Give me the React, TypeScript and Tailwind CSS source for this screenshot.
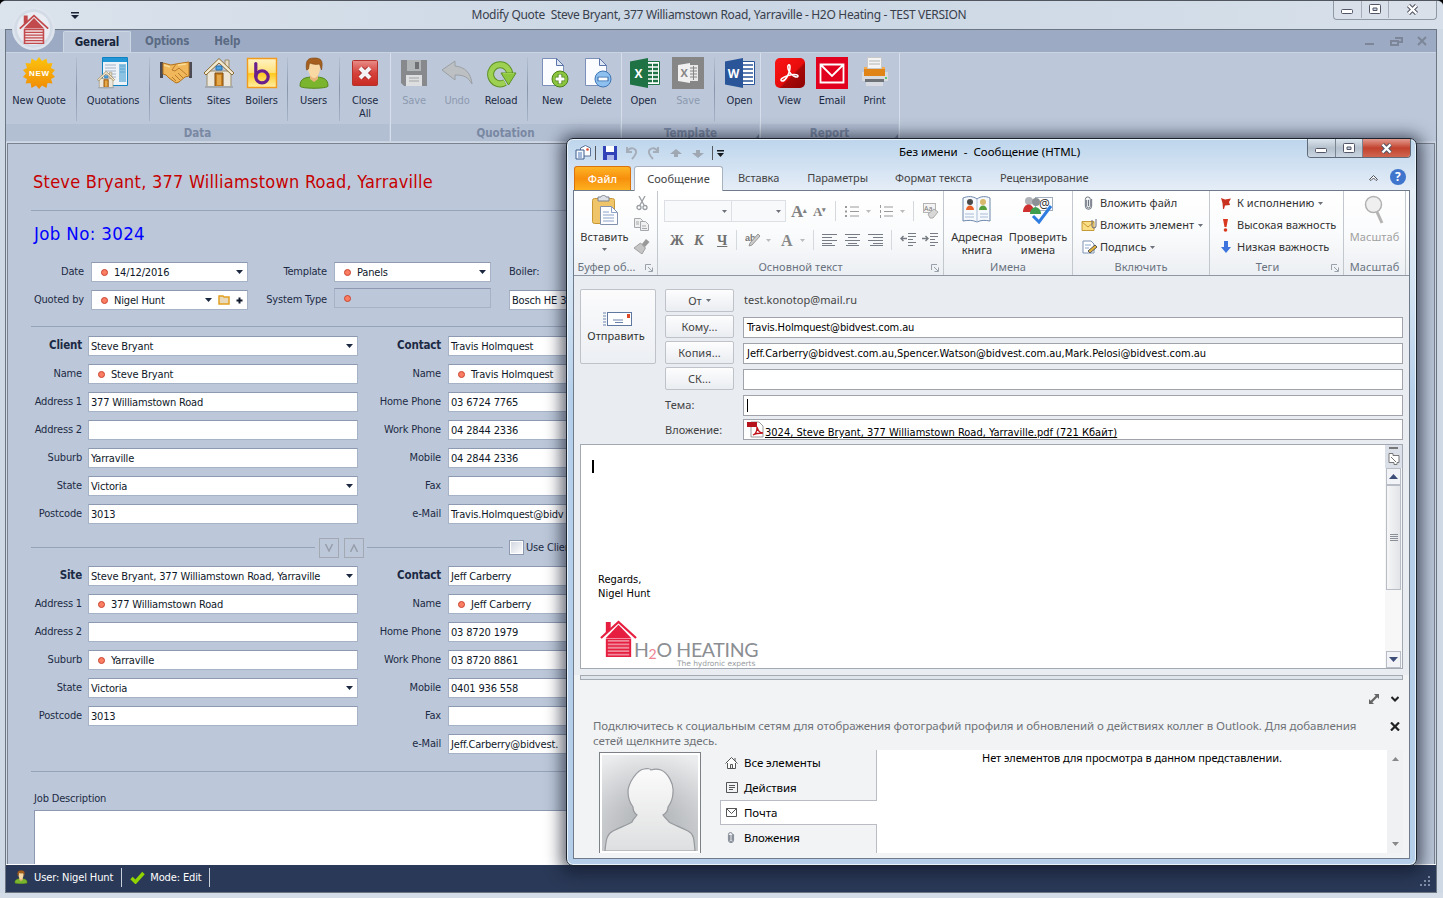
import React from "react";

type Kids = { children?: React.ReactNode };

const Caret = ({ c = "text-[#1b2840]" }: { c?: string }) => (
  <svg className={`${c} shrink-0`} width="7" height="4" viewBox="0 0 7 4"><path d="M0 0h7L3.500 4z" fill="currentColor" /></svg>
);

const Dot = () => <span className="mr-[6px] ml-[7px] size-[7px] shrink-0 rounded-full border border-[#c9432f] bg-[#fb7d62]" />;

const House = ({ w, c, l }: { w: number; c: string; l: string }) => (
  <svg width={w} height={w} viewBox="0 0 38 38" className="shrink-0">
    <path d="M6 2h5v8l-5 5z" fill={c} />
    <path d="M19 5l13 13.500H6z" fill={c} />
    <path d="M1 18.500L19 2l18 16.500" fill="none" stroke={c} strokeWidth="2.200" />
    <path d="M6 19h26v19H6z" fill={c} />
    <path d="M8 21.500h22M8 25h22M8 28.500h22M8 32h22M8 35.500h22" stroke={l} strokeWidth="1.900" />
  </svg>
);

/* ------------------------------ ribbon icons ------------------------------ */
const S = ({ children }: Kids) => <svg width="32" height="32" viewBox="0 0 32 32">{children}</svg>;

const NewBadge = () => (
  <S>
    <defs><linearGradient id="nb" x1="0" y1="0" x2="0" y2="1"><stop offset="0" stopColor="#fdc40e" /><stop offset="1" stopColor="#f08b04" /></linearGradient></defs>
    <path d="M16 0l3 4 4.500-2.500 1 5 5-.5-1.500 5L32 13l-3 3.500L32 20l-4 2 1.500 4.500-5-.5-1 5-4.500-2.500L16 32l-3-3.500L8.500 31l-1-5-5 .5L4 22l-4-2 3-3.500L0 13l4-2-1.500-5 5 .5 1-5L13 4z" fill="url(#nb)" />
    <text x="16" y="19" textAnchor="middle" fontSize="8" fontWeight="700" fill="#fff" fontFamily="Liberation Sans" textLength="20">NEW</text>
  </S>
);
const SmallHouse = () => (
  <g>
    <path d="M4 14h24v16H4z" fill="#ece7d8" stroke="#9b8c6c" />
    <path d="M22 3h4v8h-4z" fill="#e6dcc4" stroke="#9b8c6c" />
    <path d="M1 16L16 1.500 31 16l-2 2L16 6 3 18z" fill="#f3ead2" stroke="#8a6a34" />
    <path d="M12 16h8v14h-8z" fill="#c77f1d" stroke="#7f4a10" />
    <path d="M14 18h4v10h-4z" fill="#e5a94c" />
    <path d="M13 9h6v4h-6z" fill="#4aa3e0" stroke="#2a6fae" />
    <path d="M2 30h28" stroke="#a3a9b1" strokeWidth="2" />
  </g>
);
const Quotes = () => (
  <S>
    <path d="M5.500 .5h25v28h-25z" fill="#eef3f8" stroke="#0f82c2" />
    <path d="M6 1h24v4H6z" fill="#2396d6" />
    <path d="M8 8h11M8 11h11M8 14h11M8 17h11M8 20h11" stroke="#a3b4c6" strokeWidth="1.200" />
    <path d="M22 7h7v18h-7z" fill="#8cc3e3" />
    <path d="M23 9h5M23 12h5M23 15h5" stroke="#5aa5d2" />
    <g transform="translate(0 13.500) scale(.57)"><SmallHouse /></g>
  </S>
);
const Hands = () => (
  <S>
    <path d="M0 5h3v16H0zM29 5h3v16h-3z" fill="#4c4a52" />
    <path d="M3 6l8 2 5-1 6-1 7-1v14l-4 1-6 5-3 1-7-5-3-3-3-1z" fill="#f0b85a" stroke="#b4721c" />
    <path d="M16 7l-4 6 3 1 4-3 8 7M12 20l4 4M15 18l5 5M18 16l5 5" fill="none" stroke="#b97a2c" />
    <path d="M4 8l6 2M18 8l8-1" stroke="#fbdc96" strokeWidth="1.500" />
  </S>
);
const Sites = () => <S><SmallHouse /></S>;
const Boilers = () => (
  <S>
    <defs><linearGradient id="bo" x1="0" y1="0" x2="0" y2="1"><stop offset="0" stopColor="#fff3c4" /><stop offset=".48" stopColor="#ffe27a" /><stop offset=".52" stopColor="#ffc91f" /><stop offset="1" stopColor="#fff0a8" /></linearGradient></defs>
    <path d="M1.500 1.500h29v29h-29z" fill="url(#bo)" stroke="#f29a1c" strokeWidth="1.400" />
    <path d="M9.800 6.500v13" stroke="#6a1f8c" strokeWidth="3.200" strokeLinecap="round" />
    <ellipse cx="16" cy="19.800" rx="6.200" ry="6" fill="none" stroke="#6a1f8c" strokeWidth="3.200" />
  </S>
);
const Person = () => (
  <g>
    <path d="M2 29c0-8 6-9 14-9s14 1 14 9c0 3-28 3-28 0z" fill="#7bb52d" stroke="#55871b" />
    <path d="M12 17h8v5l-4 3-4-3z" fill="#e9b57c" />
    <path d="M16 3c6 0 6 5 6 8 0 5-3 10-6 10s-6-5-6-10c0-3 0-8 6-8z" fill="#f8d9a4" />
    <path d="M8.500 13C7.500 4 9 1 16 1s9.500 2 7.500 12l-2-6c-4 1-7 0-10-1l-1 6z" fill="#a5601f" stroke="#7d4413" strokeWidth=".6" />
  </g>
);
const Users = () => <S><Person /></S>;
const CloseAll = () => (
  <S>
    <defs><linearGradient id="ca" x1="0" y1="0" x2="0" y2="1"><stop offset="0" stopColor="#e98d88" /><stop offset=".5" stopColor="#d5423b" /><stop offset="1" stopColor="#c92a22" /></linearGradient></defs>
    <rect x="3.500" y="3.500" width="25" height="25" rx="1" fill="url(#ca)" stroke="#b3322c" />
    <path d="M11.500 11.500l9 9M20.500 11.500l-9 9" stroke="#a12a2a" strokeWidth="6" />
    <path d="M11 11l10 10M21 11L11 21" stroke="#f4f4f6" strokeWidth="4" />
  </S>
);
const Save = () => (
  <S>
    <path d="M3 3h26v26H6l-3-3z" fill="#87898c" />
    <path d="M9 3h14v11H9z" fill="#b2b5b8" /><path d="M17 5h4v7h-4z" fill="#6f7174" />
    <path d="M8 18h16v11H8z" fill="#dcdedf" /><path d="M11 21h10M11 24h10" stroke="#a0a2a5" />
  </S>
);
const Undo = () => <S><path d="M1 13L14 4v5c10 1 16 7 17 18-4-7-8-9-17-9v5z" fill="#bcc0c3" stroke="#9ba0a5" /></S>;
const Reload = () => (
  <S>
    <path d="M24.500 19a9.500 9.500 0 1 0-4.500 6.500" fill="none" stroke="#5d9127" strokeWidth="7" />
    <path d="M24.500 19a9.500 9.500 0 1 0-4.500 6.500" fill="none" stroke="#9ed052" strokeWidth="5" />
    <path d="M16 16h15l-7.500 12z" fill="#8dc63f" stroke="#5d9127" />
    <path d="M18 16.500h11" stroke="#9ed052" />
  </S>
);
const Page = () => (
  <g>
    <path d="M5.500 1.500h14l7 7v20h-21z" fill="#fbfcff" stroke="#7b8fb8" />
    <path d="M19.500 1.500v7h7z" fill="#dfe7f5" stroke="#5a73a8" />
  </g>
);
const NewDoc = () => (
  <S><Page /><circle cx="23" cy="22" r="8" fill="#8cc63f" stroke="#4c7f1b" /><path d="M23 17v10M18 22h10" stroke="#4c7f1b" strokeWidth="4.500" /><path d="M23 17.500v9M18.500 22h9" stroke="#fff" strokeWidth="2.800" /></S>
);
const DelDoc = () => (
  <S><Page /><circle cx="23" cy="22" r="8" fill="#8dc0ee" stroke="#3f74b4" /><path d="M17.500 22h11" stroke="#2f64a8" strokeWidth="4.500" /><path d="M18.500 22h9" stroke="#fff" strokeWidth="2.800" /></S>
);
const Office = ({ c, l, x = false }: { c: string; l: string; x?: boolean }) => (
  <S>
    <path d="M15.500 4.500h15v23h-15z" fill="#fff" stroke={c} />
    <path d="M18 8h11M18 12h11M18 16h11M18 20h11M18 24h11" stroke={c} strokeWidth={x ? 2.500 : 1.400} />
    {x && <path d="M23.500 6v20" stroke="#fff" />}
    <path d="M1 4.500L19 1v30L1 27.500z" fill={c} />
    <text x="9.500" y="20.500" textAnchor="middle" fontSize="12" fontWeight="700" fill="#fff" fontFamily="Open Sans">{l}</text>
  </S>
);
const SaveXl = () => (
  <S>
    <path d="M0 0h32v32H0z" fill="#868686" />
    <path d="M17 8h9v16h-9z" fill="#e8e8e8" /><path d="M18 11h7M18 14h7M18 17h7M18 20h7" stroke="#868686" /><path d="M21.500 9v14" stroke="#868686" />
    <path d="M6 8l12-2v20L6 24z" fill="#f0f0f0" />
    <text x="12" y="20" textAnchor="middle" fontSize="11" fontWeight="700" fill="#868686" fontFamily="Open Sans">X</text>
  </S>
);
const Pdf = () => (
  <S>
    <defs><linearGradient id="pd" x1="0" y1="0" x2="1" y2="1"><stop offset="0" stopColor="#fb1414" /><stop offset=".55" stopColor="#e80c0c" /><stop offset=".6" stopColor="#a80808" /><stop offset="1" stopColor="#8c0505" /></linearGradient></defs>
    <rect x="1" y="1" width="30" height="30" rx="5" fill="url(#pd)" />
    <path d="M8 24c-3-1 1-4 6-5.500 5-1.500 10-1.500 10 .5s-4 1-7-2-4-8-2.500-9 2 2 1 6-4.500 10.500-7.500 10z" fill="none" stroke="#fff" strokeWidth="1.600" />
  </S>
);
const Mail = () => (
  <S>
    <path d="M0 0h32v32H0z" fill="#e2001f" />
    <path d="M4.500 7.500h23v18h-23zM4.500 7.500L16 19 27.500 7.500" fill="none" stroke="#fff" strokeWidth="1.800" />
  </S>
);
const Printer = () => (
  <S>
    <path d="M3 15h26v9H3z" fill="#d8dbdf" /><path d="M5 10h21v9H5z" fill="#e08417" /><path d="M5 10h21v2H5z" fill="#f4ab4e" />
    <path d="M8.500 .5h14v11h-14z" fill="#f4f4f4" stroke="#c8c8c8" /><path d="M10 4h11M10 7h11" stroke="#b4b4b4" />
    <path d="M6 22h19v3H6z" fill="#6d7278" /><path d="M7 25h17v4H7z" fill="#d8dce2" /><circle cx="27" cy="21" r="1" fill="#35c04a" />
  </S>
);

/* ------------------------------ main ribbon ------------------------------ */
const Btn = ({ w, label, icon, off }: { w: string; label: string; icon: React.ReactNode; off?: boolean }) => (
  <div className={`flex shrink-0 flex-col items-center pt-[4px] text-center ${w} ${off ? "text-[#8d99b0]" : "text-[#1c2a45]"}`}>
    {icon}
    <span className="mt-[5px] leading-[13px] whitespace-pre">{label}</span>
  </div>
);
const Sep = ({ m }: { m: string }) => <div className={`mt-1 h-[64px] w-px shrink-0 bg-linear-to-b from-[#b4c0d2] via-[#8794ab] to-[#a6b3c8] ${m}`} />;
const Group = ({ w, title, corner, children }: Kids & { w: string; title: string; corner?: boolean }) => (
  <div className={`flex shrink-0 flex-col border-r border-[#d5deea] ${w}`}>
    <div className="flex h-[72px]">{children}</div>
    <div className="relative mr-px h-[17px] bg-[#b2bed2] text-center text-[11.500px] leading-[18px] font-bold tracking-[0px] text-[#7988a2]">
      {title}
      {corner && <svg className="absolute right-0 bottom-px" width="5" height="6"><path d="M5 0v6H0z" fill="#76849c" /></svg>}
    </div>
  </div>
);

/* ------------------------------ form pieces ------------------------------ */
const Field = ({ w, v, dot, caret, extra }: { w: string; v?: string; dot?: boolean; caret?: boolean; extra?: boolean }) => (
  <div className={`flex h-[20px] shrink-0 items-center overflow-hidden border border-[#a6b2c6] border-t-[#8c99b0] bg-white pr-[4px] pl-[2px] text-[#0e1728] ${w}`}>
    {dot && <Dot />}
    <span className="grow pt-px whitespace-nowrap">{v}</span>
    {caret && <Caret />}
    {extra && (
      <>
        <Caret />
        <svg className="mx-[6px]" width="12" height="10"><path d="M1 1h4l1 1h5v7H1z" fill="#e8d9ba" stroke="#e3a021" strokeWidth="1.500" /></svg>
        <svg width="7" height="7"><path d="M3.500 .5v6M.5 3.500h6" stroke="#101a2c" strokeWidth="2" /></svg>
      </>
    )}
  </div>
);
type R = [string, string, string?];
const Row = ({ r, lw, fw, gap, bold }: { r: R; lw: string; fw: string; gap: string; bold?: boolean }) => (
  <div className="flex h-[28px]">
    <span className={`pt-[2px] text-right leading-[15px] whitespace-nowrap ${bold ? "text-[11.500px] font-bold" : ""} ${lw} ${gap}`}>{r[0]}</span>
    <Field w={fw} v={r[1]} dot={r[2] === "d"} caret={r[2] === "c"} />
  </div>
);
const Block = ({ left, right }: { left: R[]; right: R[] }) => (
  <div className="flex">
    <div className="w-[333px]">{left.map((r, i) => <Row key={i} r={r} bold={i === 0} lw="w-[51px]" gap="mr-[6px]" fw="w-[270px]" />)}</div>
    <div>{right.map((r, i) => <Row key={i} r={r} bold={i === 0} lw="w-[77px]" gap="mr-[7px]" fw="w-[130px]" />)}</div>
  </div>
);
const client: R[] = [["Client", "Steve Bryant", "c"], ["Name", "Steve Bryant", "d"], ["Address 1", "377 Williamstown Road"], ["Address 2", ""], ["Suburb", "Yarraville"], ["State", "Victoria", "c"], ["Postcode", "3013"]];
const contact1: R[] = [["Contact", "Travis Holmquest"], ["Name", "Travis Holmquest", "d"], ["Home Phone", "03 6724 7765"], ["Work Phone", "04 2844 2336"], ["Mobile", "04 2844 2336"], ["Fax", ""], ["e-Mail", "Travis.Holmquest@bidv"]];
const site: R[] = [["Site", "Steve Bryant, 377 Williamstown Road, Yarraville", "c"], ["Address 1", "377 Williamstown Road", "d"], ["Address 2", ""], ["Suburb", "Yarraville", "d"], ["State", "Victoria", "c"], ["Postcode", "3013"]];
const contact2: R[] = [["Contact", "Jeff Carberry"], ["Name", "Jeff Carberry", "d"], ["Home Phone", "03 8720 1979"], ["Work Phone", "03 8720 8861"], ["Mobile", "0401 936 558"], ["Fax", ""], ["e-Mail", "Jeff.Carberry@bidvest."]];

const WinMin = () => <svg width="13" height="6"><rect x=".5" y=".5" width="11" height="4" rx="1" fill="#fff" stroke="#535666" /></svg>;
const WinMax = () => <svg width="13" height="11"><rect x=".5" y=".5" width="11" height="9" rx="1" fill="#fff" stroke="#535666" /><path d="M4 4h4v2.500H4z" fill="#c8d4e4" stroke="#535666" /></svg>;
const WinX = () => <svg width="13" height="11" viewBox="0 0 13 11"><path d="M2.500 1.500l8 8M10.500 1.500l-8 8" stroke="#535666" strokeWidth="4.400" /><path d="M2.500 1.500l8 8M10.500 1.500l-8 8" stroke="#fff" strokeWidth="2.400" /></svg>;

const MainWindow = () => (
  <div className="flex h-[898px] w-[1443px] flex-col overflow-hidden rounded-t-[6px] border-t border-[#50555e] bg-[#cfd9e5] font-['DejaVu_Sans_Condensed','DejaVu_Sans',sans-serif] text-[11px] tracking-[-0.17px] text-[#1c2a45]">
    <div className="flex h-[28px] shrink-0 justify-between bg-linear-to-r from-[#dbe3ec] via-[#cad6e4] to-[#d7e0ea]">
      <svg className="mt-[11px] ml-[71px] shrink-0" width="8" height="7"><path d="M0 0h8v1.500H0zM0 3h8L4 7z" fill="#1b2436" /></svg>
      <span className="ml-[26px] pt-[5px] font-['Noto_Sans',sans-serif] text-[12px] leading-[17px] tracking-[-0.31px] whitespace-pre text-[#39404c]">Modify Quote  Steve Bryant, 377 Williamstown Road, Yarraville - H2O Heating - TEST VERSION</span>
      <div className="mr-[6px] flex h-[19px] shrink-0 rounded-b-[4px] border border-t-0 border-[#8f99a6] bg-[#d9e0e9] pb-px">
        <div className="flex w-[28px] items-end justify-center border-r border-[#a5aeba] pb-[3px]"><WinMin /></div>
        <div className="flex w-[27px] items-center justify-center border-r border-[#a5aeba]"><WinMax /></div>
        <div className="flex w-[47px] items-center justify-center pr-px"><WinX /></div>
      </div>
    </div>
    <div className="mr-[6px] ml-[5px] flex h-[864px] flex-col border border-[#6c7683]">
      <div className="flex h-[22px] shrink-0 bg-[#9cabc3] text-[11.500px] leading-[23px] font-bold tracking-[-0.15px] text-[#5a6a84]">
        <div className="mt-px ml-[57px] w-[68px] rounded-t-[2px] border border-b-0 border-[#cdd7e4] bg-[#bcc8d9] text-center leading-[21px] text-[#17233a]">General</div>
        <span className="ml-[14px]">Options</span>
        <span className="ml-[25px]">Help</span>
        <svg className="mt-[6px] mr-[8px] ml-auto" width="64" height="12" fill="none" stroke="#7c8698" strokeWidth="2">
          <path d="M1 8h9" /><path d="M31 2h7v4h-3M27 5h7v4h-7z" /><path d="M54 1l8 8M62 1l-8 8" />
        </svg>
      </div>
      <div className="flex h-[90px] shrink-0 border-t border-b border-[#c9d3e1] bg-[#bcc8d9]">
        <Group w="w-[385px]" title="Data">
          <Btn w="w-[66px]" label="New Quote" icon={<NewBadge />} /><Sep m="ml-[4px]" />
          <Btn w="w-[72px]" label="Quotations" icon={<Quotes />} /><Sep m="" />
          <Btn w="w-[51px]" label="Clients" icon={<Hands />} /><Btn w="w-[35px]" label="Sites" icon={<Sites />} /><Btn w="w-[51px]" label="Boilers" icon={<Boilers />} /><Sep m="" />
          <Btn w="w-[51px]" label="Users" icon={<Users />} /><Sep m="" />
          <Btn w="w-[50px]" label={"Close\nAll"} icon={<CloseAll />} />
        </Group>
        <Group w="w-[231px]" title="Quotation">
          <Btn w="w-[46px]" label="Save" icon={<Save />} off /><Btn w="w-[40px]" label="Undo" icon={<Undo />} off /><Btn w="w-[48px]" label="Reload" icon={<Reload />} /><Sep m="ml-[2px]" />
          <Btn w="w-[49px]" label="New" icon={<NewDoc />} /><Btn w="w-[38px]" label="Delete" icon={<DelDoc />} />
        </Group>
        <Group w="w-[139px]" title="Template" corner>
          <Btn w="w-[43px]" label="Open" icon={<span className="ml-[3px]"><Office c="#1f7244" l="X" x /></span>} /><Btn w="w-[46px]" label="Save" icon={<SaveXl />} off /><Sep m="ml-[3px]" />
          <Btn w="w-[49px]" label="Open" icon={<Office c="#2a5699" l="W" />} />
        </Group>
        <Group w="w-[139px]" title="Report" corner>
          <Btn w="w-[57px]" label="View" icon={<Pdf />} /><Btn w="w-[28px]" label="Email" icon={<Mail />} /><Btn w="w-[57px]" label="Print" icon={<Printer />} />
        </Group>
      </div>
      <div className="mt-px mr-px ml-px grow overflow-hidden border border-b-0 border-[#7a8290] bg-[#bcc8d9] pl-[23px]">
        <h1 className="mt-[25px] ml-[2px] text-[18px] leading-[26px] tracking-[0.25px] text-[#c60000]">Steve Bryant, 377 Williamstown Road, Yarraville</h1>
        <div className="mt-[15px] mr-6 h-px bg-[#95a3b9]" />
        <h2 className="mt-[10px] ml-[3px] text-[18.500px] leading-[26px] tracking-[0.35px] text-[#0000ff]">Job No: 3024</h2>
        <div className="mt-[15px] flex h-[28px] w-[900px]">
          <span className="mr-[7px] w-[53px] pt-[2px] text-right">Date</span><Field w="w-[157px]" v="14/12/2016" dot caret />
          <span className="mr-[7px] w-[79px] pt-[2px] text-right">Template</span><Field w="w-[157px]" v="Panels" dot caret />
          <span className="ml-[18px] pt-[2px]">Boiler:</span>
        </div>
        <div className="flex h-[36px] w-[900px]">
          <span className="mr-[7px] w-[53px] pt-[2px] text-right whitespace-nowrap">Quoted by</span><Field w="w-[157px]" v="Nigel Hunt" dot extra />
          <span className="mr-[7px] w-[79px] pt-[2px] text-right">System Type</span>
          <div className="-mt-[2px] mr-[18px] flex h-[20px] w-[157px] items-center border border-[#a6b2c6] border-t-[#8c99b0] pl-[2px]"><Dot /></div>
          <Field w="w-[240px]" v="Bosch HE 30" />
        </div>
        <div className="mr-6 mb-[9px] h-px bg-[#95a3b9]" />
        <Block left={client} right={contact1} />
        <div className="mt-[5px] mb-[8px] flex h-[21px] w-[800px] items-center">
          <div className="mr-[4px] h-px w-[284px] bg-[#95a3b9]" />
          <div className="mr-[5px] flex size-[20px] items-center justify-center border border-[#a3a9b3]"><svg width="8" height="8"><path d="M.5 0L4 7 7.500 0" fill="none" stroke="#969eab" strokeWidth="1.500" /></svg></div>
          <div className="mr-[3px] flex size-[20px] items-center justify-center border border-[#a3a9b3]"><svg width="8" height="8"><path d="M.5 8L4 1 7.500 8" fill="none" stroke="#969eab" strokeWidth="1.500" /></svg></div>
          <div className="mr-[6px] h-px w-[136px] bg-[#95a3b9]" />
          <div className="mr-[2px] size-[15px] border border-[#8c99b0] bg-linear-to-br from-[#cfd5df] to-white shadow-[inset_0_0_0_1px_#fff]" />
          <span className="whitespace-nowrap">Use Client</span>
        </div>
        <Block left={site} right={contact2} />
        <div className="mt-[9px] mr-6 h-px bg-[#95a3b9]" />
        <div className="mt-[19px] ml-[3px] leading-[15px]">Job Description</div>
        <div className="mt-[4px] mr-6 ml-[3px] h-[80px] border border-[#8c99b0] bg-white" />
      </div>
      <div className="flex h-[28px] shrink-0 items-center border-t border-white bg-[#2a3957] pb-[3px] text-[11px] tracking-[-0.12px] text-white">
        <svg className="ml-[8px]" width="14" height="14" viewBox="0 0 32 32"><Person /></svg>
        <span className="ml-[6px]">User: Nigel Hunt</span>
        <div className="ml-[8px] h-[19px] w-px bg-[#c9cfda]" />
        <svg className="ml-[8px]" width="15" height="13"><path d="M1.500 7l4 4L13.500 2" fill="none" stroke="#8fd400" strokeWidth="3.400" /></svg>
        <span className="ml-[5px]">Mode: Edit</span>
        <div className="ml-[7px] h-[19px] w-px bg-[#c9cfda]" />
        <svg className="mt-[9px] mr-[4px] ml-auto" width="12" height="11" fill="#7f8ea8"><path d="M8 0h2v2H8zM4 4h2v2H4zM8 4h2v2H8zM0 8h2v2H0zM4 8h2v2H4zM8 8h2v2H8z" /></svg>
      </div>
    </div>
    <div className="h-[5px] shrink-0 bg-[#d3dce7]" />
  </div>
);

/* ------------------------------ mail window ------------------------------ */
const G = "#9a9a9a";
const MGroup = ({ w, title, launch, off, children }: Kids & { w: string; title: string; launch?: boolean; off?: boolean }) => (
  <div className={`flex shrink-0 flex-col border-r border-[#c3c8cf] ${w}`}>
    <div className="h-[68px]">{children}</div>
    <div className="relative h-[16px] text-center leading-[15px] text-[#6a7280]">
      <span className={off ? "mr-[18px]" : ""}>{title}</span>
      {launch && <svg className="absolute right-[4px] bottom-[3px]" width="8" height="8" fill="none" stroke="#9aa1ab"><path d="M.5 6V.5H6M3 3l4 4M7.500 3.500v4h-4" /></svg>}
    </div>
  </div>
);
const Cr = ({ m = "ml-[4px]", c = "text-[#6d7179]" }: { m?: string; c?: string }) => (
  <svg className={`inline-block shrink-0 align-middle ${m} ${c}`} width="5" height="3"><path d="M0 0h5L2.500 3z" fill="currentColor" /></svg>
);
const VS = ({ m }: { m: string }) => <div className={`h-[20px] w-px shrink-0 bg-[#d5d8dc] ${m}`} />;
const Clip = ({ w = 10, h = 15 }: { w?: number; h?: number }) => (
  <svg width={w} height={h} viewBox="0 0 10 15" fill="none" stroke="#6b7380" strokeWidth="1.100"><path d="M3 4v7a2 2 0 0 0 4 0V3.500A2.500 2.500 0 0 0 1.500 3.500V11a3.500 3.500 0 0 0 7 0V3M5 4v7" /></svg>
);
const Lines = ({ a }: { a: number[][] }) => (
  <svg width="15" height="13" stroke="#777c84">{a.map(([x, w], i) => <path key={i} d={`M${x} ${i * 3 - (i > 3 ? 1 : 0) + 0.5}h${w}`} />)}</svg>
);
const HBtn = ({ children }: Kids) => (
  <div className="flex h-[23px] w-[69px] items-center justify-center rounded-[2px] border border-[#bfc3c9] bg-linear-to-b from-[#fdfdfe] to-[#eaedf1] text-[#444]">{children}</div>
);
const HField = ({ children }: Kids) => (
  <div className="ml-[9px] flex h-[21px] w-[660px] items-center border border-[#a0a4aa] bg-white pl-[3px] font-['DejaVu_Sans_Condensed',sans-serif] text-[11px] tracking-[0px] whitespace-nowrap text-black">{children}</div>
);
const tab = "px-0 leading-[24px] tracking-[-0.08px] text-[#444]";

const MailRibbon = () => (
  <div className="flex h-[85px] shrink-0 border-b border-[#8e97a4] bg-linear-to-b from-white via-[#fafbfc] to-[#eceff3]">
    <MGroup w="w-[84px]" title="Буфер об..." launch off>
      <div className="flex">
        <div className="flex w-[60px] flex-col items-center pt-[4px] pl-px">
          <svg width="28" height="31" viewBox="0 0 28 31">
            <rect x="1.500" y="3.500" width="22" height="25" rx="2" fill="#f0c469" stroke="#c99836" />
            <path d="M7 2h3c0-2 5-2 5 0h3v4H7z" fill="#dfe3e8" stroke="#7c838d" />
            <path d="M9.500 11.500h11l6 6v12h-17z" fill="#fdfdff" stroke="#8292ad" /><path d="M20.500 11.500v6h6M12 17h6M12 20h11M12 23h11M12 26h11" fill="none" stroke="#8aa2c8" />
          </svg>
          <span className="mt-[3px] leading-[15px] text-[#333]">Вставить</span>
          <Cr m="mt-[4px]" />
        </div>
        <div className="flex flex-col items-center gap-[7px] pt-[5px]">
          <svg width="12" height="15" fill="none" stroke="#9a9da2" strokeWidth="1.300"><path d="M3 0l5 9M9 0L4 9" /><circle cx="3" cy="11.500" r="2" /><circle cx="9" cy="11.500" r="2" /></svg>
          <svg width="16" height="14" fill="#f0f0f0" stroke="#a4a7ab"><path d="M.5 .5h6l2 2v7h-8zM2 4h3M2 6h3" /><path d="M6.500 3.500h5l3 3v6h-8zM8 8h4M8 10.500h5" /></svg>
          <svg width="16" height="15"><path d="M12 0l3.500 3-5 5.500-3-3z" fill="#999" /><path d="M6.500 4l5 5-3.500 6-8-6z" fill="#c5c5c5" stroke="#a0a0a0" /></svg>
        </div>
      </div>
    </MGroup>
    <MGroup w="w-[286px]" title="Основной текст" launch>
      <div className="flex h-[40px] items-center pl-[6px]">
        <div className="flex h-[22px] w-[68px] items-center justify-end border border-[#dcdfe3] bg-[#f8f9fa] pr-[4px]"><Cr /></div>
        <div className="-ml-px flex h-[22px] w-[55px] items-center justify-end border border-[#dcdfe3] bg-[#f8f9fa] pr-[4px]"><Cr /></div>
        <span className="ml-[5px] w-[22px] font-['Liberation_Serif',serif] text-[17px] font-bold text-[#808080]">A<sup className="text-[7px]">▴</sup></span>
        <span className="w-[20px] font-['Liberation_Serif',serif] text-[13px] font-bold text-[#808080]">A<sup className="text-[7px]">▾</sup></span>
        <VS m="ml-[2px] mr-[9px]" />
        <svg width="14" height="13" stroke={G}><path d="M5 2h9M5 6.500h9M5 11h9" /><path d="M0 2h2M0 6.500h2M0 11h2" strokeWidth="2" /></svg><Cr m="ml-[7px] mr-[8px]" c="text-[#bbb]" />
        <svg width="14" height="13" stroke={G}><path d="M5 2h9M5 6.500h9M5 11h9" /><path d="M1.500 0v3M1.500 5v3M1.500 10v3" /></svg><Cr m="ml-[7px]" c="text-[#bbb]" />
        <VS m="ml-[8px] mr-[9px]" />
        <svg width="17" height="16"><rect x=".5" y=".5" width="12" height="9" fill="#f3f3f3" stroke="#b4b4b4" /><text x="1" y="8" fontSize="7" fill="#777">Aa</text><path d="M5 11l6-5 4 3-5 6H7z" fill="#d8d8d8" stroke="#aaa" /></svg>
      </div>
      <div className="flex h-[18px] items-center pl-[12px] font-['Liberation_Serif',serif] text-[14px] font-bold text-[#707070]">
        <span className="w-[24px]">Ж</span><span className="w-[23px] italic">К</span><span className="w-[16px] underline">Ч</span>
        <VS m="mr-[8px] ml-[3px]" />
        <svg width="17" height="15"><text x="0" y="8" fontSize="9" fill="#777" fontFamily="Liberation Sans">ab</text><path d="M15 3L7 12l-3 1 1-3 8-9z" fill="#ccc" stroke="#999" /></svg><Cr m="ml-[4px] mr-[10px]" c="text-[#bbb]" />
        <span className="w-[11px] text-[16px] text-[#888]">A</span><Cr m="ml-[8px]" c="text-[#bbb]" />
        <VS m="mr-[8px] ml-[8px]" />
        <div className="flex gap-[8px]">
          <Lines a={[[0, 15], [0, 10], [0, 15], [0, 10], [0, 13]]} /><Lines a={[[0, 15], [3, 9], [0, 15], [3, 9], [1, 13]]} /><Lines a={[[0, 15], [5, 10], [0, 15], [5, 10], [2, 13]]} />
        </div>
        <VS m="mx-[8px]" />
        <svg width="38" height="14" stroke="#777c84"><path d="M8 .5h8M8 3.500h8M8 6.500h5M8 9.500h8M8 12.500h5M30 .5h8M30 3.500h8M30 6.500h5M30 9.500h8M30 12.500h5" fill="none" /><path d="M7 5.500H1M3.500 3L1 5.500 3.500 8M22 5.500h6M25.500 3L28 5.500 25.500 8" fill="none" strokeWidth="1.400" /></svg>
      </div>
    </MGroup>
    <MGroup w="w-[129px]" title="Имена">
      <div className="flex pt-[5px] pl-px text-center leading-[13px] text-[#333]">
        <div className="flex w-[64px] flex-col items-center">
          <svg width="30" height="28"><path d="M1 2c5-2 10-2 14 1 4-3 9-3 13-1v23c-5-1-9-1-13 1-4-2-9-2-14-1z" fill="#f6f9fd" stroke="#6d87ab" /><path d="M15 3v23M3 18h9M3 21h9M18 18h8M18 21h8" stroke="#a9bcd6" /><circle cx="8" cy="6" r="3" fill="#4a4a4a" /><path d="M4 14c0-6 8-6 8 0z" fill="#e8622a" /><circle cx="21" cy="6" r="3" fill="#d8b86a" /><path d="M17 14c0-6 8-6 8 0z" fill="#56a03c" /></svg>
          <span className="mt-[6px]">Адресная<br />книга</span>
        </div>
        <div className="flex w-[58px] flex-col items-center">
          <svg width="32" height="28"><rect x="13.500" y="1.500" width="17" height="13" fill="#fff" stroke="#a2adbd" /><text x="17" y="12" fontSize="12" fill="#333">@</text><circle cx="7" cy="5" r="4" fill="#b0b4b8" /><path d="M1 16c0-10 11-10 11 0z" fill="#cf3030" /><circle cx="14" cy="6" r="4" fill="#8d9195" /><path d="M8 18c0-9 11-9 11 0z" fill="#3f9e4d" /><path d="M11 20l6 6L29 10" fill="none" stroke="#2f7de0" strokeWidth="3" /></svg>
          <span className="mt-[6px]">Проверить<br />имена</span>
        </div>
      </div>
    </MGroup>
    <MGroup w="w-[137px]" title="Включить">
      <div className="flex flex-col pt-px leading-[22px] whitespace-nowrap text-[#333]">
        <div className="flex h-[22px] items-center"><span className="flex w-[27px] pl-[11px]"><Clip w={9} h={14} /></span>Вложить файл</div>
        <div className="flex h-[22px] items-center"><span className="flex w-[27px] pl-[8px]"><svg width="17" height="14"><path d="M1 3.500h12v9H1z" fill="#fbdd83" stroke="#c49a3a" /><path d="M1 4l6 5 6-5" fill="none" stroke="#c49a3a" /><path d="M11 2v6a2 2 0 0 0 4 0V1" fill="none" stroke="#667" /></svg></span>Вложить элемент<Cr /></div>
        <div className="flex h-[22px] items-center"><span className="flex w-[27px] pl-[9px]"><svg width="16" height="14"><path d="M1 1h8l3 3v9H1z" fill="#fff" stroke="#7d93b5" /><path d="M3 5h6M3 8h4" stroke="#88a5d0" /><path d="M6 11l7-6 2 2-7 6z" fill="#e3b53c" stroke="#555" /></svg></span>Подпись<Cr /></div>
      </div>
    </MGroup>
    <MGroup w="w-[134px]" title="Теги" launch off>
      <div className="flex flex-col pt-px leading-[22px] whitespace-nowrap text-[#333]">
        <div className="flex h-[22px] items-center"><svg className="mr-[6px] ml-[11px]" width="10" height="11"><path d="M0 0l4 1.500 6-1-2 3.500 1 3-5 .5L3 11H2L1.500 5z" fill="#c8321f" /></svg>К исполнению<Cr /></div>
        <div className="flex h-[22px] items-center"><svg className="mr-[7px] ml-[10px]" width="10" height="13"><path d="M3 0h5L6.500 8h-2z" fill="#d9381e" /><circle cx="5.500" cy="11" r="1.800" fill="#d9381e" /></svg>Высокая важность</div>
        <div className="flex h-[22px] items-center"><svg className="mr-[6px] ml-[11px]" width="10" height="12"><path d="M3 0h4v6h3l-5 6-5-6h3z" fill="#3d74dd" /></svg>Низкая важность</div>
      </div>
    </MGroup>
    <MGroup w="w-[62px]" title="Масштаб">
      <div className="flex flex-col items-center pt-[4px] text-[#a0a0a0]">
        <svg width="22" height="30"><circle cx="9.500" cy="9.500" r="8" fill="#efefef" stroke="#b2b2b2" strokeWidth="1.500" /><path d="M13 17l5 11" stroke="#b4b4b4" strokeWidth="3" /></svg>
        <span className="mt-[4px] leading-[15px]">Масштаб</span>
      </div>
    </MGroup>
  </div>
);

const NavItem = ({ label, icon }: { label: string; icon: React.ReactNode }) => (
  <div className="flex h-[25px] w-[157px] items-center border-r border-[#b9bdc3] pl-[5px]"><span className="flex w-[19px] justify-start">{icon}</span>{label}</div>
);

const MailWindow = () => (
  <div className="absolute top-[138px] left-[566px] flex h-[728px] w-[851px] flex-col rounded-[7px] border border-[#1d232c] bg-[linear-gradient(to_bottom,#bdd5ec_0px,#cfe0f1_24px,#e6eef7_52px,#d3e3f3_150px,#b5cfea_260px,#b5cfea_100%)] px-[6px] pb-[6px] font-['Noto_Sans',sans-serif] text-[11px] tracking-[0.05px] shadow-[0_2px_16px_5px_rgba(15,22,40,0.65),inset_0_0_0_1px_#eaf4fc]">
    <div className="flex h-[27px] shrink-0 items-start">
      <div className="flex h-[27px] items-center pl-[2px]">
        <svg width="17" height="15"><path d="M5.500 3l5-2.500L15.500 3v8h-10z" fill="#fff" stroke="#5a7398" /><path d="M1 5h8v9H1z" fill="#f4f8ff" stroke="#3e5c8c" /><path d="M3 8h4M3 10h4M3 12h4" stroke="#5579b5" /><circle cx="12.500" cy="4.500" r="1.300" fill="#e0492c" /></svg>
        <div className="ml-[3px] h-[14px] w-px bg-[#54585e]" />
        <svg className="ml-[7px]" width="14" height="14"><path d="M0 0h14v14H0z" fill="#3141b8" /><path d="M3 0h8v6H3z" fill="#fff" /><path d="M4 9h7v5H4z" fill="#aeb7ea" /></svg>
        <svg className="ml-[8px]" width="80" height="14" fill="none" stroke="#a5adb8" strokeWidth="2"><path d="M2 1v5h5M2 6c3-6 10-4 9 1-1 3-2 4-4 6" /><path d="M33 1v5h-5M33 6c-3-6-10-4-9 1 1 3 2 4 4 6" /><path d="M45 8l6-5 6 5h-4v3h-4V8z" fill="#9ea7b2" stroke="none" /><path d="M67 7l6 5 6-5h-4V4h-4v3z" fill="#9ea7b2" stroke="none" /></svg>
        <div className="ml-[7px] h-[14px] w-px bg-[#54585e]" />
        <svg className="mt-px ml-[4px]" width="7" height="7"><path d="M0 0h7v1.500H0zM0 3h7L3.500 7z" fill="#15181d" /></svg>
      </div>
      <span className="ml-[175px] pt-[4px] text-[11.500px] leading-[17px] tracking-[0.02px] whitespace-pre text-black">Без имени  -  Сообщение (HTML)</span>
      <div className="mr-[-1px] ml-auto flex h-[19px] overflow-hidden rounded-b-[4px] border border-t-0 border-[#5f6b78]">
        <div className="flex w-[28px] items-end justify-center border-r border-[#7a8591] bg-linear-to-b from-[#dbe5ee] via-[#b4c0cc] to-[#c9d6e2] pb-[3px]"><WinMin /></div>
        <div className="flex w-[27px] items-center justify-center border-r border-[#7a8591] bg-linear-to-b from-[#dbe5ee] via-[#b4c0cc] to-[#c9d6e2]"><WinMax /></div>
        <div className="flex w-[47px] items-center justify-center bg-linear-to-b from-[#e19a8f] via-[#c2412d] to-[#cf6650]"><WinX /></div>
      </div>
    </div>
    <div className="flex h-[24px] shrink-0">
      <div className="ml-px h-[24px] w-[57px] rounded-t-[3px] border border-b-0 border-[#d9730f] bg-linear-to-b from-[#fdb423] via-[#f78f0c] to-[#fdb11f] text-center leading-[23px] font-medium text-white">Файл</div>
      <div className="z-10 -mb-px ml-[3px] w-[89px] rounded-t-[3px] border border-b-0 border-[#a8b2bf] bg-white text-center leading-[23px] text-[#444]">Сообщение</div>
      <span className={`ml-[15px] ${tab}`}>Вставка</span>
      <span className={`ml-[28px] ${tab}`}>Параметры</span>
      <span className={`ml-[27px] ${tab}`}>Формат текста</span>
      <span className={`ml-[28px] ${tab}`}>Рецензирование</span>
      <svg className="mt-[9px] mr-[12px] ml-auto" width="9" height="6" fill="#fff" stroke="#4a515c"><path d="M.5 4.500l4-4 4 4-1.500 1-2.500-2.500L2 5.500z" /></svg>
      <div className="mt-[3px] mr-[4px] size-[16px] rounded-full bg-[#3f75cc] text-center text-[12px] leading-[16px] font-bold text-white">?</div>
    </div>
    <div className="flex grow flex-col overflow-hidden border border-[#6f7b8a] bg-[#f1f3f5]">
      <MailRibbon />
      <div className="h-[399px] shrink-0 bg-[#e9ecf1] px-[6px] pt-[13px]">
        <div className="flex h-[155px]">
          <div className="flex h-[75px] w-[76px] flex-col items-center rounded-[2px] border border-[#bfc3c9] bg-linear-to-b from-[#fbfbfc] to-[#eceff3] pt-[22px] text-[#333]">
            <svg width="30" height="15"><rect x="4.500" y=".5" width="24" height="13" fill="#fff" stroke="#5f78a0" /><path d="M0 1h3M0 4h3M0 7h3M0 10h3M0 13h3M10 8h10M12 10.500h8" stroke="#6b84ad" /><path d="M24 2h3v4h-3z" fill="#df4a26" /></svg>
            <span className="mt-[1px] mr-[4px] leading-[16px]">Отправить</span>
          </div>
          <div className="ml-[9px] flex flex-col gap-[3px]">
            <div className="flex"><HBtn>От<Cr /></HBtn><span className="ml-[10px] leading-[21px] tracking-[0.05px] text-[#444]">test.konotop@mail.ru</span></div>
            <div className="flex items-end"><HBtn>Кому...</HBtn><HField><span className="tracking-[-0.12px]">Travis.Holmquest@bidvest.com.au</span></HField></div>
            <div className="flex items-end"><HBtn>Копия...</HBtn><HField><span className="tracking-[-0.02px]">Jeff.Carberry@bidvest.com.au,Spencer.Watson@bidvest.com.au,Mark.Pelosi@bidvest.com.au</span></HField></div>
            <div className="flex items-end"><HBtn>СК...</HBtn><HField /></div>
            <div className="flex h-[23px] items-end"><span className="w-[69px] self-center text-[#444]">Тема:</span><HField><span className="h-[13px] w-px bg-black" /></HField></div>
            <div className="-mt-px flex h-[23px] items-center"><span className="w-[69px] text-[#444]">Вложение:</span>
              <HField>
                <svg className="mb-px" width="18" height="17"><path d="M4 1h8l4 4v11H4z" fill="#fff" stroke="#999" /><path d="M0 1h10v5H0z" fill="#b5121b" /><path d="M6 14c3-1 4-5 4-8 1 4 3 6 6 6-4 0-7 0-10 2z" fill="none" stroke="#c0141c" strokeWidth="1.300" /></svg>
                <span className="pt-[6px] underline">3024, Steve Bryant, 377 Williamstown Road, Yarraville.pdf (721 Кбайт)</span>
              </HField>
            </div>
          </div>
        </div>
        <div className="flex h-[225px] w-[823px] overflow-hidden border border-[#a3a9b3] bg-white">
          <div className="grow pl-[12px] font-['DejaVu_Sans_Condensed',sans-serif] text-[11px] leading-[14px] tracking-[0.02px] text-black">
            <div className="mt-[15px] -ml-px h-[13px] w-[2px] bg-black" />
            <div className="mt-[100px] ml-[5px]">Regards,<br />Nigel Hunt</div>
            <div className="mt-[19px] ml-[7px] flex h-[48px]">
              <House w={37} c="#e61e40" l="#f08a9b" />
              <div className="-ml-[3px] flex w-[125px] flex-col pt-[21px] font-['Lato',sans-serif] text-[#8b8e92]">
                <span className="flex h-[18px] items-center text-[19.500px] leading-[18px] tracking-[-0.32px] whitespace-nowrap">H<span className="mt-[7px] text-[14px] leading-[11px] text-[#f08092]">2</span>O HEATING</span>
                <span className="pl-[43px] font-['DejaVu_Sans',sans-serif] text-[7.500px] leading-[9px] tracking-[-0.05px] whitespace-nowrap text-[#9a9da1]">The hydronic experts</span>
              </div>
            </div>
          </div>
          <div className="flex w-[17px] flex-col items-center bg-[#f7f7f8]">
            <div className="flex h-[23px] w-[17px] flex-col items-center bg-[#dbe0e8] pt-[2px]">
              <div className="h-[2px] w-[9px] bg-[#777]" />
              <svg className="mt-[4px]" width="12" height="12" fill="#fff" stroke="#777"><path d="M1 .5h4v2h6v7h-2v2H6v-2H1zM3 4l5 5" /></svg>
            </div>
            <div className="flex h-[17px] w-[15px] items-center justify-center border border-[#b7bcc5] bg-[#f2f3f6]"><svg width="9" height="5"><path d="M0 5h9L4.500 0z" fill="#3c4d79" /></svg></div>
            <div className="flex h-[105px] w-[15px] items-center justify-center border border-[#b7bcc5] bg-linear-to-r from-[#f6f6f7] to-[#e2e4e8]"><svg width="8" height="8" stroke="#8a8f98"><path d="M0 .5h8M0 2.500h8M0 4.500h8M0 6.500h8" /></svg></div>
            <div className="mt-auto flex h-[17px] w-[15px] items-center justify-center border border-[#b7bcc5] bg-[#f2f3f6]"><svg width="9" height="5"><path d="M0 0h9L4.500 5z" fill="#3c4d79" /></svg></div>
          </div>
        </div>
      </div>
      <div className="mx-[6px] h-[5px] shrink-0 border border-[#a3a9b3] bg-[#dfe3ea]" />
      <div className="flex h-[38px] shrink-0 items-center justify-end gap-[12px] pr-[10px] pb-px">
        <svg width="10" height="10" fill="#666"><path d="M5 0h5v5L8.300 3.300 3.300 8.300 5 10H0V5l1.700 1.700 5-5z" /></svg>
        <svg width="8" height="6"><path d="M.5 1L4 4.500 7.500 1" fill="none" stroke="#222" strokeWidth="2" /></svg>
      </div>
      <div className="flex h-[30px] shrink-0 justify-between pr-[9px] pl-[19px] text-[11.500px] leading-[15px] tracking-[-0.07px] text-[#6f7277]">
        <p className="whitespace-pre">{"Подключитесь к социальным сетям для отображения фотографий профиля и обновлений о действиях коллег в Outlook. Для добавления\nсетей щелкните здесь."}</p>
        <svg className="mt-[4px]" width="10" height="9"><path d="M1 .5l8 8M9 .5l-8 8" stroke="#222" strokeWidth="2.200" /></svg>
      </div>
      <div className="mt-[2px] flex h-[103px] shrink-0 overflow-hidden pl-[25px] text-[11.500px] tracking-[-0.07px] text-black">
        <div className="mt-[2px] h-[110px] w-[102px] border border-[#7d8085] bg-white p-[2px]">
          <svg width="96" height="96">
            <defs><radialGradient id="av" cx=".5" cy=".6" r=".7"><stop offset="0" stopColor="#8e9297" /><stop offset="1" stopColor="#e8eaec" /></radialGradient><linearGradient id="av2" x1="0" y1="0" x2="0" y2="1"><stop offset="0" stopColor="#eff0f1" /><stop offset="1" stopColor="#b0b3b7" /></linearGradient><linearGradient id="av3" x1="0" y1="0" x2="0" y2="1"><stop offset="0" stopColor="#fbfbfb" /><stop offset="1" stopColor="#dedfe0" /></linearGradient></defs>
            <path d="M0 0h96v96H0z" fill="url(#av2)" /><path d="M0 0h96v96H0z" fill="url(#av)" opacity=".45" />
            <path d="M3 96c1-12 2-17 8-20 8-4 14-6 19-9 1-3 3-4 5-7-3-2-4-6-4-8-3-4-5-8-5-15 0-9 9-22 16-23 3-1 7 0 7 1 3-1 7-1 10 0 7 3 13 14 12 22 0 7-2 11-5 15 0 3-1 6-5 8 2 3 4 4 6 7 5 3 11 5 19 9 6 3 6 8 7 20z" fill="url(#av3)" stroke="#96999d" strokeWidth="1.200" />
          </svg>
        </div>
        <div className="ml-[19px] w-[157px]">
          <NavItem label="Все элементы" icon={<svg width="13" height="12" fill="#fff" stroke="#555"><path d="M.5 6.500l6-6 6 6M2.500 6v5.500h8V6M5.500 11.500v-4h2v4M10 1v3" /></svg>} />
          <NavItem label="Действия" icon={<svg className="ml-px" width="12" height="11" fill="none" stroke="#555"><path d="M.5 .5h11v10H.5zM3 3.500h6M3 5.500h6M3 7.500h4" /></svg>} />
          <div className="flex h-[25px] w-[157px] items-center border border-r-0 border-[#b9bdc3] bg-white pl-[5px]"><span className="flex w-[18px]"><svg width="12" height="9" fill="none" stroke="#555"><path d="M.5 .5h10v8H.5zM.5 .5l5 5 5-5" /></svg></span>Почта</div>
          <NavItem label="Вложения" icon={<span className="pl-[2px]"><Clip w={8} h={11} /></span>} />
          <div className="h-[10px] w-[157px] border-r border-[#b9bdc3]" />
        </div>
        <div className="w-[510px] bg-white text-center text-[11px] leading-[15px]">Нет элементов для просмотра в данном представлении.</div>
        <div className="flex w-[16px] flex-col items-center justify-between bg-[#f0f1f2] py-[7px]">
          <svg width="7" height="4"><path d="M0 4h7L3.500 0z" fill="#888" /></svg>
          <svg width="7" height="4"><path d="M0 0h7L3.500 4z" fill="#888" /></svg>
        </div>
      </div>
    </div>
  </div>
);

export default function App() {
  return (
    <div className="relative h-[898px] w-[1443px] overflow-hidden bg-black leading-[15px]">
      <MainWindow />
      <div className="absolute top-[7px] left-[12px] flex size-[43px] items-center justify-center rounded-full border-2 border-[#dde4ed] bg-[#e9edf3] shadow-[inset_0_0_0_3px_#d3dbe7]"><House w={30} c="#c24a4c" l="#f0dfe2" /></div>
      <MailWindow />
    </div>
  );
}
